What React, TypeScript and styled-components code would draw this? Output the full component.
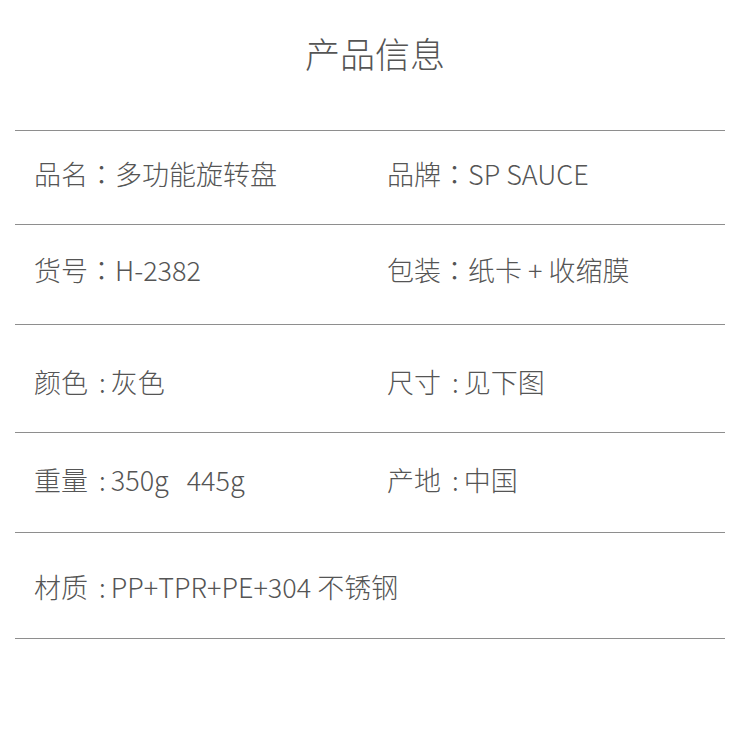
import styled, { createGlobalStyle } from 'styled-components';

const GlobalStyle = createGlobalStyle`
  html, body {
    margin: 0;
    padding: 0;
    background: #ffffff;
  }
  body {
    font-family: "Noto Sans CJK SC", "Noto Sans", sans-serif;
    color: #555555;
  }
`;

const Page = styled.div`
  width: 750px;
  display: flex;
  flex-direction: column;
`;

const Title = styled.h1`
  margin: 0;
  height: 130px;
  padding-top: 29px;
  box-sizing: border-box;
  text-align: center;
  font-size: 35px;
  font-weight: 300;
  line-height: 48px;
  color: #555555;
`;

const Table = styled.div`
  margin: 0 25px 0 15px;
  border-top: 1px solid #8e8e8e;
  display: flex;
  flex-direction: column;
`;

// $shift moves the text up (negative) or down (positive) inside the row
const Row = styled.div<{ $h: number; $shift: number }>`
  height: ${(p) => p.$h}px;
  border-bottom: 1px solid #8e8e8e;
  box-sizing: border-box;
  display: grid;
  grid-template-columns: 353px 1fr;
  align-items: center;
  padding-left: 19px;
  padding-top: ${(p) => Math.max(p.$shift, 0) * 2}px;
  padding-bottom: ${(p) => Math.max(-p.$shift, 0) * 2}px;
`;

const Cell = styled.div`
  font-size: 27px;
  font-weight: 300;
  line-height: 36px;
  color: #555555;
  white-space: pre;
`;

// full-width colon sits centred in its box, as in the TC cut of the font
const Colon = styled.span<{ $narrow?: boolean }>`
  font-family: ${(p) =>
    p.$narrow ? '"Noto Sans CJK SC"' : '"Noto Sans CJK TC"'}, sans-serif;
  margin: ${(p) => (p.$narrow ? '0 5px 0 11px' : '0')};
`;

type Field = { label: string; value: string; narrow?: boolean };
type Item = { h: number; shift: number; left: Field; right?: Field };

const rows: Item[] = [
  {
    h: 94,
    shift: -4,
    left: { label: '品名', value: '多功能旋转盘' },
    right: { label: '品牌', value: 'SP SAUCE' },
  },
  {
    h: 100,
    shift: -5,
    left: { label: '货号', value: 'H-2382' },
    right: { label: '包装', value: '纸卡 + 收缩膜' },
  },
  {
    h: 108,
    shift: 3,
    left: { label: '颜色', value: '灰色', narrow: true },
    right: { label: '尺寸', value: '见下图', narrow: true },
  },
  {
    h: 100,
    shift: -3,
    left: { label: '重量', value: '350g   445g', narrow: true },
    right: { label: '产地', value: '中国', narrow: true },
  },
  {
    h: 106,
    shift: 1,
    left: { label: '材质', value: 'PP+TPR+PE+304 不锈钢', narrow: true },
  },
];

function FieldCell({ field }: { field: Field }) {
  return (
    <Cell>
      {field.label}
      <Colon $narrow={field.narrow}>{field.narrow ? ':' : '：'}</Colon>
      {field.value}
    </Cell>
  );
}

export default function App() {
  return (
    <Page>
      <GlobalStyle />
      <Title>产品信息</Title>
      <Table>
        {rows.map((r) => (
          <Row key={r.left.label} $h={r.h} $shift={r.shift}>
            <FieldCell field={r.left} />
            {r.right && <FieldCell field={r.right} />}
          </Row>
        ))}
      </Table>
    </Page>
  );
}
